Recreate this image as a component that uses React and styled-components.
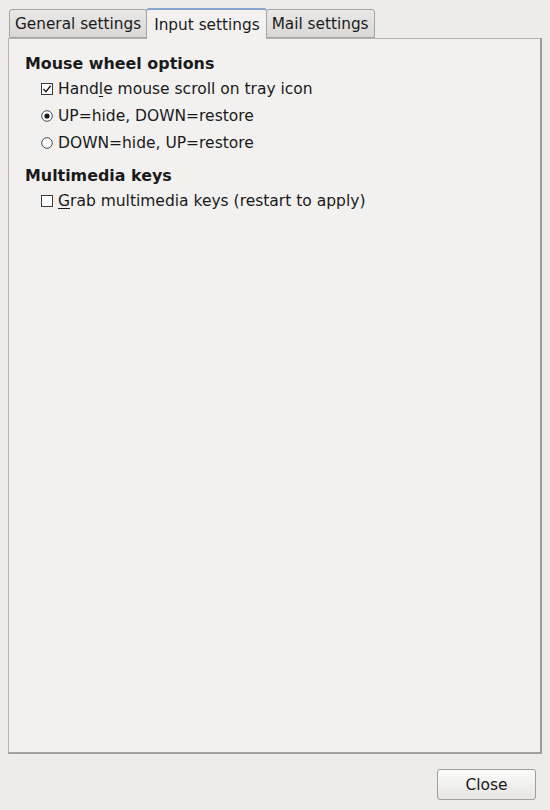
import React from 'react';
import styled, { createGlobalStyle } from 'styled-components';

const GlobalStyle = createGlobalStyle`
    html, body {
        margin: 0;
        padding: 0;
        background: #edeceb;
    }
    body {
        font-family: "DejaVu Sans", sans-serif;
        font-size: 15.5px;
        color: #1a1a1a;
    }
`;

const Dialog = styled.div`
    width: 550px;
    height: 810px;
    box-sizing: border-box;
    padding: 8px 8px 0 8px;
    display: flex;
    flex-direction: column;
`;

const TabBar = styled.div`
    display: flex;
    align-items: flex-end;
    height: 30px;
    padding-left: 1px;
    position: relative;
    z-index: 1;
`;

const Tab = styled.div`
    box-sizing: border-box;
    height: ${p => (p.active ? '31px' : '29px')};
    margin-bottom: ${p => (p.active ? '-1px' : '0')};
    padding: 0 ${p => (p.active ? '6px 0 7px' : '5px')};
    display: flex;
    align-items: center;
    padding-top: ${p => (p.active ? '0' : '1px')};
    border: 1px solid #a4a4a2;
    border-bottom: ${p => (p.active ? 'none' : '1px solid #a4a4a2')};
    border-top: ${p => (p.active ? '2px solid #86a6cc' : '1px solid #a4a4a2')};
    border-radius: 3px 3px 0 0;
    background: ${p => (p.active ? '#f2f1f0' : 'linear-gradient(#e9e8e7, #d9d8d6)')};
    color: #1a1a1a;
    font-size: 15.3px;
    white-space: nowrap;
    margin-left: ${p => (p.first ? '0' : '-1px')};
`;

const Panel = styled.div`
    flex: 0 0 716px;
    box-sizing: border-box;
    background: #f2f1f0;
    border: 1px solid #b5b4b2;
    border-right-color: #9c9b99;
    border-bottom: 2px solid #a2a1a0;
    border-right-width: 2px;
    padding: 14px 16px;
`;

const Section = styled.div`
    display: flex;
    flex-direction: column;
    margin-bottom: 9px;
`;

const Heading = styled.div`
    font-weight: bold;
    font-size: 15.9px;
    line-height: 22px;
`;

const Option = styled.label`
    display: flex;
    align-items: center;
    gap: 5px;
    height: 27px;
    padding-left: 16px;
    line-height: 22px;
    u {
        text-decoration: underline;
        text-underline-offset: 2px;
    }
`;

const Box = styled.svg`
    width: 12px;
    height: 12px;
    flex: 0 0 12px;
`;

const Footer = styled.div`
    display: flex;
    justify-content: flex-end;
    padding: 15px 6px 0 0;
`;

const Button = styled.button`
    width: 99px;
    height: 31px;
    border: 1px solid #a09f9d;
    border-radius: 3px;
    background: linear-gradient(#fbfbfa, #e6e5e3);
    font-family: "DejaVu Sans", sans-serif;
    font-size: 15.5px;
    color: #1a1a1a;
`;

const CheckIcon = ({ checked }) => (
    <Box viewBox="0 0 12 12">
        <rect x="0.5" y="0.5" width="11" height="11" fill="#fff" stroke="#3a3a3a" />
        {checked && <path d="M2.5 6 L5 8.7 L9.6 2.8" fill="none" stroke="#1a1a1a" strokeWidth="1.4" />}
    </Box>
);

const RadioIcon = ({ checked }) => (
    <Box viewBox="0 0 12 12">
        <circle cx="6" cy="6" r="5.3" fill="#fff" stroke="#4a4a4a" />
        {checked && <circle cx="6" cy="6" r="2.6" fill="#1a1a1a" />}
    </Box>
);

export default function App() {
    return (
        <>
            <GlobalStyle />
            <Dialog>
                <TabBar>
                    <Tab first>General settings</Tab>
                    <Tab active>Input settings</Tab>
                    <Tab>Mail settings</Tab>
                </TabBar>
                <Panel>
                    <Section>
                        <Heading>Mouse wheel options</Heading>
                        <Option><CheckIcon checked /><span>Hand<u>l</u>e mouse scroll on tray icon</span></Option>
                        <Option><RadioIcon checked /><span>UP=hide, DOWN=restore</span></Option>
                        <Option><RadioIcon /><span>DOWN=hide, UP=restore</span></Option>
                    </Section>
                    <Section>
                        <Heading>Multimedia keys</Heading>
                        <Option><CheckIcon /><span><u>G</u>rab multimedia keys (restart to apply)</span></Option>
                    </Section>
                </Panel>
                <Footer>
                    <Button>Close</Button>
                </Footer>
            </Dialog>
        </>
    );
}
